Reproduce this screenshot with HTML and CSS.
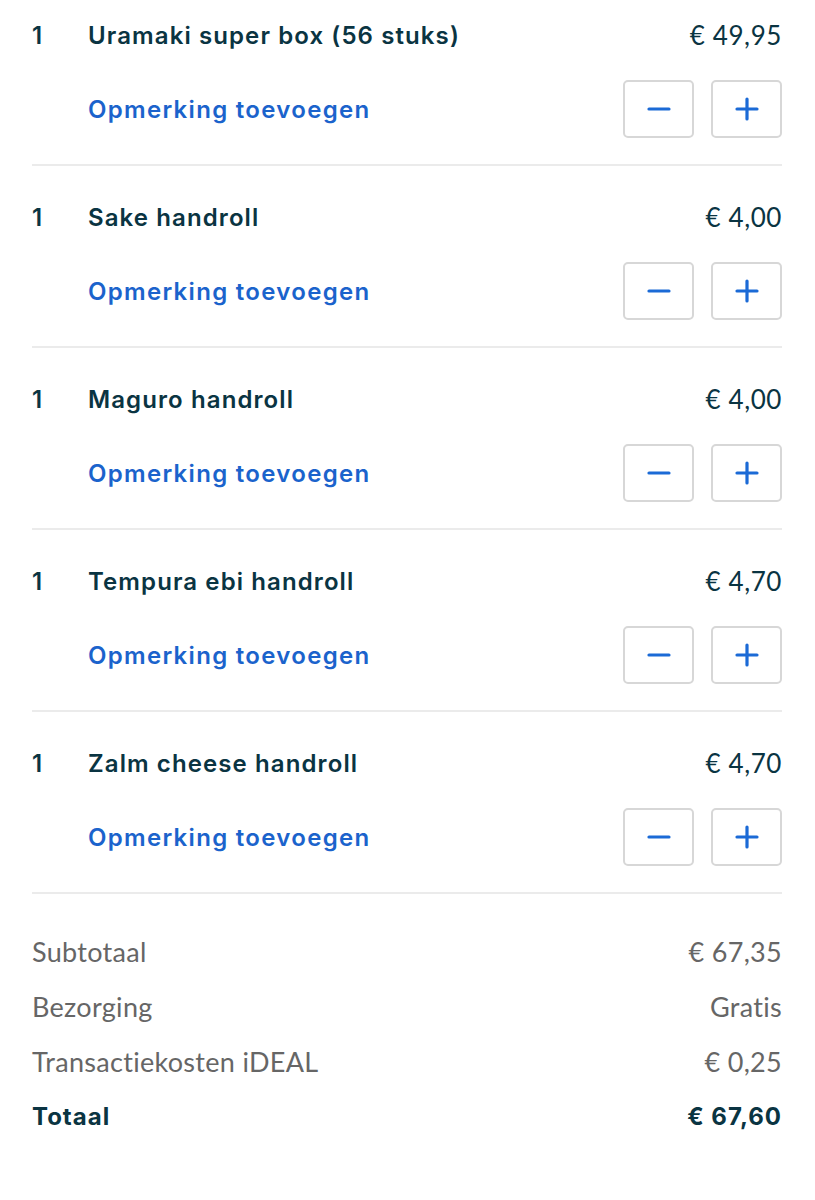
FILE: index.html
```html
<!DOCTYPE html>
<html lang="nl">
<head>
  <meta charset="UTF-8" />
  <meta name="viewport" content="width=device-width, initial-scale=1.0" />
  <title>Winkelmandje</title>
  <link rel="stylesheet" href="styles.css">
</head>
<body>
<main class="basket">
  <ul class="items">
    <li class="item">
      <div class="item-head">
        <span class="qty">1</span>
        <span class="name">Uramaki super box (56 stuks)</span>
        <span class="price">€ 49,95</span>
      </div>
      <div class="item-actions">
        <a class="note">Opmerking toevoegen</a>
        <div class="stepper">
          <button class="step" aria-label="Minder">
            <svg width="24" height="24" viewBox="0 0 24 24"><path d="M2 12h20" stroke="#1b6ad6" stroke-width="3.2" stroke-linecap="round"/></svg>
          </button>
          <button class="step" aria-label="Meer">
            <svg width="24" height="24" viewBox="0 0 24 24"><path d="M2 12h20M12 2v20" stroke="#1b6ad6" stroke-width="3.2" stroke-linecap="round"/></svg>
          </button>
        </div>
      </div>
    </li>
    <li class="item">
      <div class="item-head">
        <span class="qty">1</span>
        <span class="name">Sake handroll</span>
        <span class="price">€ 4,00</span>
      </div>
      <div class="item-actions">
        <a class="note">Opmerking toevoegen</a>
        <div class="stepper">
          <button class="step" aria-label="Minder">
            <svg width="24" height="24" viewBox="0 0 24 24"><path d="M2 12h20" stroke="#1b6ad6" stroke-width="3.2" stroke-linecap="round"/></svg>
          </button>
          <button class="step" aria-label="Meer">
            <svg width="24" height="24" viewBox="0 0 24 24"><path d="M2 12h20M12 2v20" stroke="#1b6ad6" stroke-width="3.2" stroke-linecap="round"/></svg>
          </button>
        </div>
      </div>
    </li>
    <li class="item">
      <div class="item-head">
        <span class="qty">1</span>
        <span class="name">Maguro handroll</span>
        <span class="price">€ 4,00</span>
      </div>
      <div class="item-actions">
        <a class="note">Opmerking toevoegen</a>
        <div class="stepper">
          <button class="step" aria-label="Minder">
            <svg width="24" height="24" viewBox="0 0 24 24"><path d="M2 12h20" stroke="#1b6ad6" stroke-width="3.2" stroke-linecap="round"/></svg>
          </button>
          <button class="step" aria-label="Meer">
            <svg width="24" height="24" viewBox="0 0 24 24"><path d="M2 12h20M12 2v20" stroke="#1b6ad6" stroke-width="3.2" stroke-linecap="round"/></svg>
          </button>
        </div>
      </div>
    </li>
    <li class="item">
      <div class="item-head">
        <span class="qty">1</span>
        <span class="name">Tempura ebi handroll</span>
        <span class="price">€ 4,70</span>
      </div>
      <div class="item-actions">
        <a class="note">Opmerking toevoegen</a>
        <div class="stepper">
          <button class="step" aria-label="Minder">
            <svg width="24" height="24" viewBox="0 0 24 24"><path d="M2 12h20" stroke="#1b6ad6" stroke-width="3.2" stroke-linecap="round"/></svg>
          </button>
          <button class="step" aria-label="Meer">
            <svg width="24" height="24" viewBox="0 0 24 24"><path d="M2 12h20M12 2v20" stroke="#1b6ad6" stroke-width="3.2" stroke-linecap="round"/></svg>
          </button>
        </div>
      </div>
    </li>
    <li class="item">
      <div class="item-head">
        <span class="qty">1</span>
        <span class="name">Zalm cheese handroll</span>
        <span class="price">€ 4,70</span>
      </div>
      <div class="item-actions">
        <a class="note">Opmerking toevoegen</a>
        <div class="stepper">
          <button class="step" aria-label="Minder">
            <svg width="24" height="24" viewBox="0 0 24 24"><path d="M2 12h20" stroke="#1b6ad6" stroke-width="3.2" stroke-linecap="round"/></svg>
          </button>
          <button class="step" aria-label="Meer">
            <svg width="24" height="24" viewBox="0 0 24 24"><path d="M2 12h20M12 2v20" stroke="#1b6ad6" stroke-width="3.2" stroke-linecap="round"/></svg>
          </button>
        </div>
      </div>
    </li>
  </ul>

  <dl class="summary">
    <div class="row"><dt>Subtotaal</dt><dd>€ 67,35</dd></div>
    <div class="row"><dt>Bezorging</dt><dd>Gratis</dd></div>
    <div class="row"><dt>Transactiekosten iDEAL</dt><dd>€ 0,25</dd></div>
    <div class="row total"><dt>Totaal</dt><dd>€ 67,60</dd></div>
  </dl>
</main>
</body>
</html>
```

FILE: styles.css
```css
body {
  margin: 0;
  background: #fff;
  font-family: Lato, 'Open Sans', sans-serif;
  color: #0a3442;
}

.basket {
  padding: 0 32px;
  width: 750px;
}

.items {
  list-style: none;
  margin: 0;
  padding: 0;
}

.item {
  padding: 35px 0 26px;
  border-bottom: 2px solid #ebebeb;
}

.item:first-child {
  padding-top: 19px;
}

.item-head {
  display: flex;
  align-items: center;
  height: 32px;
  font-size: 24px;
}

.qty,
.name {
  font-family: Inter, sans-serif;
  font-weight: 600;
}

.qty {
  width: 56px;
}

.name {
  flex: 1;
  letter-spacing: 1.1px;
}

.price {
  font-size: 26px;
  letter-spacing: 0.6px;
}

.item-actions {
  display: flex;
  align-items: center;
  margin-top: 29px;
  padding-left: 56px;
}

.note {
  flex: 1;
  font-family: Inter, sans-serif;
  font-weight: 600;
  font-size: 24px;
  letter-spacing: 1.3px;
  color: #1b63cc;
  cursor: pointer;
}

.stepper {
  display: flex;
  gap: 17px;
}

.step {
  width: 71px;
  height: 58px;
  border: 2px solid #d7d7d7;
  border-radius: 5px;
  background: #fff;
  display: flex;
  align-items: center;
  justify-content: center;
  padding: 0;
  cursor: pointer;
}

.summary {
  margin: 0;
  padding-top: 30px;
}

.summary .row {
  display: flex;
  justify-content: space-between;
  align-items: center;
  height: 55px;
  font-size: 27px;
  letter-spacing: 0.3px;
  color: #666;
}

.summary dt,
.summary dd {
  margin: 0;
}

.summary .total {
  color: #0a3442;
  font-family: Inter, sans-serif;
  font-weight: 700;
  font-size: 24px;
  letter-spacing: 1px;
}
```
